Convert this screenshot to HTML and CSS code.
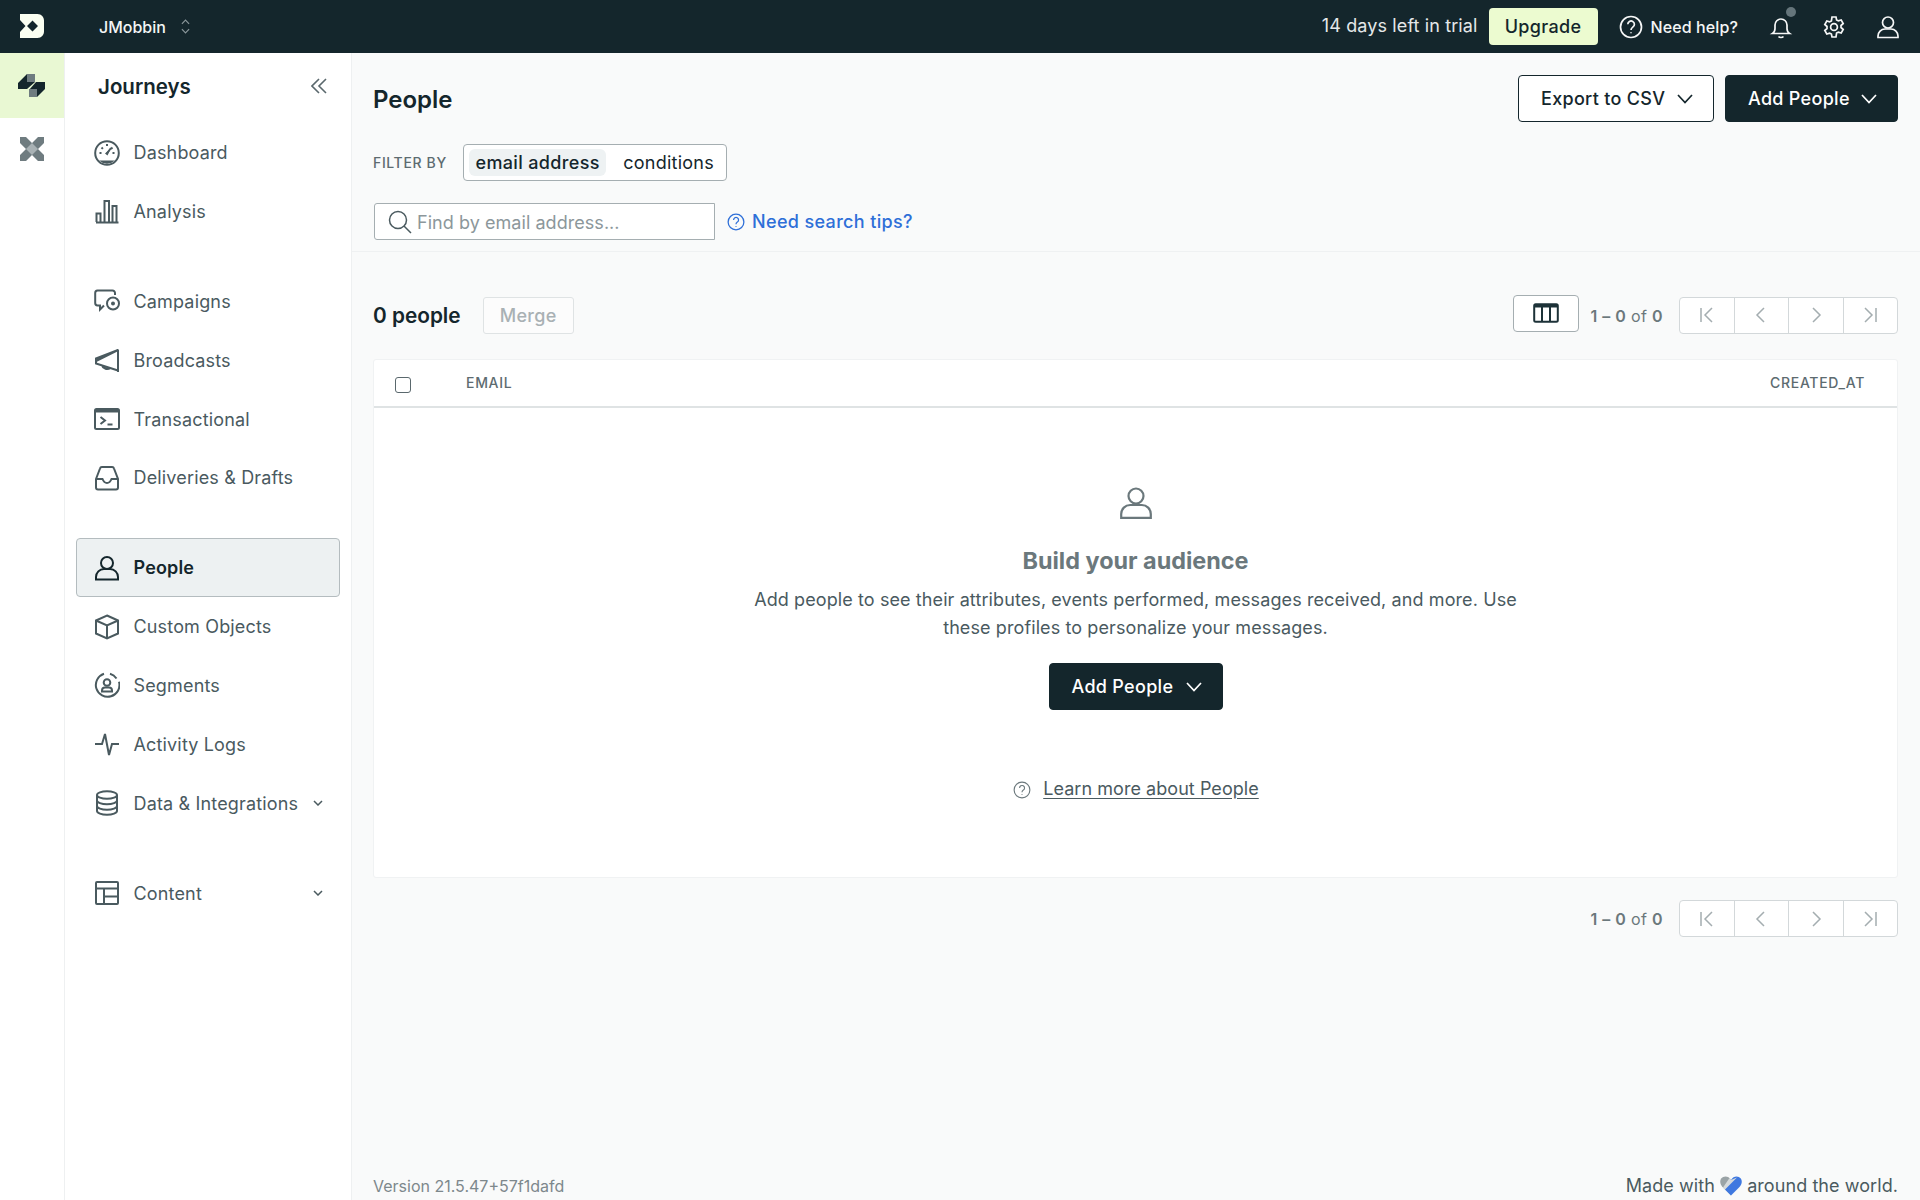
FILE: index.html
```html
<!DOCTYPE html>
<html lang="en">
<head>
<meta charset="utf-8">
<title>People</title>
<link rel="stylesheet" href="styles.css">
</head>
<body>
<header class="topbar">
  <svg class="logo" viewBox="0 0 24 24"><path fill="#fbfff2" fill-rule="evenodd" d="M0 0H17.500C21.500 0 24 3 24 6.500V17.500C24 21 21.500 24 17.500 24H0V18L5.500 12 0 6ZM12.500 6.500 7 12 12.500 17.500 18 12Z"/></svg>
  <div class="workspace">JMobbin</div>
  <svg class="updown" viewBox="0 0 10 16"><path d="M1 5 5 1 9 5M1 11 5 15 9 11"/></svg>
  <div class="top-right">
    <span class="trial">14 days left in trial</span>
    <span class="upgrade">Upgrade</span>
    <svg class="ic-top help-ic" viewBox="0 0 24 24"><circle cx="12" cy="12" r="10.500"/><path d="M8.800 9.300a3.300 3.300 0 1 1 5 2.800c-1.200.8-1.800 1.400-1.800 2.900M12 17.200v1"/></svg>
    <span class="need-help">Need help?</span>
    <span class="bell-wrap">
      <svg class="ic-top" viewBox="0 0 24 24"><path d="M3.500 18.500c1.500-1 2.500-2.500 2.500-5V10a6 6 0 0 1 12 0v3.500c0 2.500 1 4 2.500 5ZM9.500 21.500c1.200 1.300 3.800 1.300 5 0"/></svg>
      <span class="dot"></span>
    </span>
    <svg class="ic-top gear" viewBox="0 0 24 24"><path d="M10 2h4l.6 2.900 1.800 1 2.800-.9 2 3.500-2.200 2v2l2.200 2-2 3.500-2.800-.9-1.800 1L14 22h-4l-.6-2.900-1.800-1-2.800.9-2-3.500 2.200-2v-2l-2.200-2 2-3.500 2.800.9 1.800-1Z"/><circle cx="12" cy="12" r="3.400"/></svg>
    <svg class="ic-top user-top" viewBox="0 0 24 24"><circle cx="12" cy="7.500" r="5.500"/><path d="M2 22.500v-1.500a7 7 0 0 1 7-7h6a7 7 0 0 1 7 7v1.500Z"/></svg>
  </div>
</header>

<div class="shell">
  <aside class="rail">
    <div class="rail-item active">
      <svg class="rail-ic" viewBox="0 0 28 24"><path fill="#14262c" d="M0 9 9 0V8H17L9 15H0ZM11 16 18 8H27V15L19 23V15H11Z"/><path fill="#6f7c80" d="M9 0H17V8H9ZM11 15H19V23H11Z"/></svg>
    </div>
    <div class="rail-item">
      <svg class="rail-ic x" viewBox="0 0 24 24"><path fill="#6f7c80" d="M0 0H6L12 6 18 0H24V6L18 12 24 18V24H18L12 18 6 24H0V18L6 12 0 6Z"/><path fill="#a9b2b5" d="M12 6 18 12 12 18 6 12Z"/></svg>
    </div>
  </aside>

  <nav class="sidebar">
    <div class="side-head">
      <span class="side-title">Journeys</span>
      <svg class="collapse" viewBox="0 0 16 16"><path d="M8 1 1 8 8 15M15 1 8 8 15 15"/></svg>
    </div>
    <div class="nav-group">
      <a class="nav-item"><svg class="nav-ic" viewBox="0 0 26 26"><circle cx="13" cy="13" r="11.800"/><path d="M13 4v2M5.500 13h2M18.500 13h2M7.500 7.500l1.400 1.400M18.500 7.500l-1.400 1.400M17 8l-4.500 6"/><path class="fill" d="M5 20.500h16a11.800 11.800 0 0 1-16 0ZM11 13.500l2.500 2 3.500-7.500Z"/></svg><span>Dashboard</span></a>
      <a class="nav-item"><svg class="nav-ic" viewBox="0 0 26 26"><path d="M2 24.500h22.500M2.500 24v-8.500h4V24M10.500 24V3h4.500v21M18.500 24V8h4v16"/></svg><span>Analysis</span></a>
    </div>
    <div class="nav-group">
      <a class="nav-item"><svg class="nav-ic" viewBox="0 0 26 26"><path d="M10 17.500 6 21.500V17.500H3.500a2.500 2.500 0 0 1-2.300-2.500V5A2.500 2.500 0 0 1 3.500 2.500h15A2.500 2.500 0 0 1 21 5v2"/><circle cx="19" cy="15.500" r="6"/><circle class="fill" cx="19" cy="15.500" r="2"/></svg><span>Campaigns</span></a>
      <a class="nav-item"><svg class="nav-ic" viewBox="0 0 26 26"><path d="M24 2.500V25M24 3 2 11.500V16.500L24 23.500M2 14 24 3M8 18.500c1 3.500 5.500 4.500 8.500 2.500"/></svg><span>Broadcasts</span></a>
      <a class="nav-item"><svg class="nav-ic" viewBox="0 0 26 22"><rect x="1" y="1" width="24" height="20" rx="1.500"/><path class="fill" d="M1 1h24v3.500H1Z"/><path d="M6.500 9 11 12.500 6.500 16M13.500 16.500h5"/></svg><span>Transactional</span></a>
      <a class="nav-item"><svg class="nav-ic" viewBox="0 0 26 26"><path d="M2 14 6 3.500A2 2 0 0 1 8 2h10a2 2 0 0 1 2 1.500L24 14v8.500a2 2 0 0 1-2 2H4a2 2 0 0 1-2-2ZM2 14h6.500c1 2.500 2.500 4 4.500 4s3.500-1.500 4.500-4H24"/></svg><span>Deliveries &amp; Drafts</span></a>
    </div>
    <div class="nav-group">
      <a class="nav-item selected"><svg class="nav-ic" viewBox="0 0 26 26"><circle cx="13" cy="8" r="6"/><path d="M2 24.500v-2.500a8 8 0 0 1 8-8h6a8 8 0 0 1 8 8v2.500Z"/></svg><span>People</span></a>
      <a class="nav-item"><svg class="nav-ic" viewBox="0 0 26 26"><path d="M13 1.500 24 6.500V19.500L13 24.500 2 19.500V6.500ZM2 6.500 13 11.500 24 6.500M13 11.500V24.500"/></svg><span>Custom Objects</span></a>
      <a class="nav-item"><svg class="nav-ic" viewBox="0 0 26 26"><path d="M10 1.800a11.800 11.800 0 1 0 15 8M16 1.800a11.800 11.800 0 0 1 6.500 4.700"/><circle cx="13" cy="10.500" r="3.300"/><path d="M8 19.500v-1a3 3 0 0 1 3-3h4a3 3 0 0 1 3 3v1Z"/></svg><span>Segments</span></a>
      <a class="nav-item"><svg class="nav-ic" viewBox="0 0 26 26"><path d="M1 13H8L11 3 15 24 18 13H25"/></svg><span>Activity Logs</span></a>
      <a class="nav-item"><svg class="nav-ic" viewBox="0 0 26 26"><ellipse cx="13" cy="5" rx="10" ry="3.800"/><path d="M3 5V21c0 2 4.500 3.800 10 3.800S23 23 23 21V5M3 10.500c0 2 4.500 3.800 10 3.800s10-1.800 10-3.800M3 16c0 2 4.500 3.800 10 3.800S23 18 23 16"/></svg><span>Data &amp; Integrations</span><svg class="nav-caret" viewBox="0 0 10 6"><path d="M1 1 5 5 9 1"/></svg></a>
    </div>
    <div class="nav-group">
      <a class="nav-item"><svg class="nav-ic" viewBox="0 0 26 26"><rect x="2" y="2" width="22" height="22" rx="1"/><path d="M2 8.500H24M10 8.500V24M10 16.500H24"/></svg><span>Content</span><svg class="nav-caret" viewBox="0 0 10 6"><path d="M1 1 5 5 9 1"/></svg></a>
    </div>
  </nav>

  <main class="main">
    <section class="page-head">
      <div class="title-row">
        <h1 class="page-title">People</h1>
        <div class="title-actions">
          <button class="btn btn-outline">Export to CSV<svg class="caret" viewBox="0 0 16 10"><path d="M1 1 8 8.500 15 1"/></svg></button>
          <button class="btn btn-dark">Add People<svg class="caret" viewBox="0 0 16 10"><path d="M1 1 8 8.500 15 1"/></svg></button>
        </div>
      </div>
      <div class="filter-row">
        <span class="filter-label">FILTER BY</span>
        <div class="filter-box"><span class="pill on">email address</span><span class="pill">conditions</span></div>
      </div>
      <div class="search-row">
        <div class="search">
          <svg class="search-ic" viewBox="0 0 24 24"><circle cx="10" cy="10" r="8.500"/><path d="M16 16 23 23"/></svg>
          <span class="placeholder">Find by email address...</span>
        </div>
        <svg class="tips-ic" viewBox="0 0 24 24"><circle cx="12" cy="12" r="10.500"/><path d="M8.800 9.300a3.300 3.300 0 1 1 5 2.800c-1.200.8-1.800 1.400-1.800 2.900M12 17.200v1"/></svg>
        <a class="tips">Need search tips?</a>
      </div>
    </section>

    <section class="content">
      <div class="toolbar">
        <span class="count">0 people</span>
        <span class="merge">Merge</span>
        <span class="col-btn"><svg class="col-ic" viewBox="0 0 26 20"><rect x="1.200" y="1.200" width="23.600" height="17.600" rx="1.500"/><path class="fill" d="M1 1h24v3.500H1Z"/><path d="M9 3V18M17 3V18"/></svg></span>
        <span class="range range-top">1 – 0 <i>of</i> 0</span>
        <div class="pager">
          <span class="page-btn"><svg viewBox="0 0 16 16"><path d="M2 1V15M13 1 6 8 13 15"/></svg></span>
          <span class="page-btn"><svg viewBox="0 0 16 16"><path d="M11 1 4 8 11 15"/></svg></span>
          <span class="page-btn"><svg viewBox="0 0 16 16"><path d="M5 1 12 8 5 15"/></svg></span>
          <span class="page-btn"><svg viewBox="0 0 16 16"><path d="M3 1 10 8 3 15M14 1V15"/></svg></span>
        </div>
      </div>

      <div class="card">
        <div class="table-head">
          <span class="check"></span>
          <span class="th">EMAIL</span>
          <span class="th th-right">CREATED_AT</span>
        </div>
        <div class="empty">
          <svg class="empty-ic" viewBox="0 0 32 32"><circle cx="16" cy="9" r="7.500"/><path d="M1.200 30.800V27a9 9 0 0 1 9-9h11.600a9 9 0 0 1 9 9v3.800Z"/></svg>
          <h2 class="empty-title">Build your audience</h2>
          <p class="empty-text">Add people to see their attributes, events performed, messages received, and more. Use these profiles to personalize your messages.</p>
          <button class="btn btn-dark btn-empty">Add People<svg class="caret" viewBox="0 0 16 10"><path d="M1 1 8 8.500 15 1"/></svg></button>
          <div class="learn">
            <svg class="learn-ic" viewBox="0 0 24 24"><circle cx="12" cy="12" r="10.500"/><path d="M8.800 9.300a3.300 3.300 0 1 1 5 2.800c-1.200.8-1.800 1.400-1.800 2.900M12 17.200v1"/></svg>
            <a class="learn-link">Learn more about People</a>
          </div>
        </div>
      </div>

      <div class="bottom-pager">
        <span class="range">1 – 0 <i>of</i> 0</span>
        <div class="pager">
          <span class="page-btn"><svg viewBox="0 0 16 16"><path d="M2 1V15M13 1 6 8 13 15"/></svg></span>
          <span class="page-btn"><svg viewBox="0 0 16 16"><path d="M11 1 4 8 11 15"/></svg></span>
          <span class="page-btn"><svg viewBox="0 0 16 16"><path d="M5 1 12 8 5 15"/></svg></span>
          <span class="page-btn"><svg viewBox="0 0 16 16"><path d="M3 1 10 8 3 15M14 1V15"/></svg></span>
        </div>
      </div>
    </section>

    <footer class="footer">
      <span class="version">Version 21.5.47+57f1dafd</span>
      <span class="made">Made with <svg class="heart" viewBox="0 0 22 20"><path fill="#9aa3a6" d="M11 4C8.500-.5 3.500-.5 1.200 2.500-.8 5.500.5 9 3 11.500L11 19.500Z"/><path fill="#3f78e0" d="M11 4C13.500-.5 18.500-.5 20.800 2.500 22.800 5.500 21.500 9 19 11.500L11 19.500 5 13.500Z"/><path fill="#d5d9db" d="M9.500 2 11 4 17 1.500 5 13.500 3 11.500Z"/></svg> around the world.</span>
    </footer>
  </main>
</div>
</body>
</html>
```
FILE: styles.css
```css
* { box-sizing: border-box; }
html, body { margin: 0; height: 100%; }
body {
  font-family: Inter, "Liberation Sans", sans-serif;
  font-size: 18px;
  letter-spacing: .1px;
  color: #14262c;
  background: #f9fafa;
  overflow: hidden;
  display: flex;
  flex-direction: column;
}
svg { display: block; flex: none; fill: none; stroke: currentColor; }
svg .fill { fill: currentColor; stroke: none; }

.topbar {
  height: 53px;
  flex: none;
  background: #14262c;
  color: #fff;
  display: flex;
  align-items: center;
  padding: 0 20px;
}
.logo { width: 24px; height: 24px; stroke: none; margin-top: -1px; }
.workspace { margin-left: 55px; font-size: 16px; font-weight: 500; color: #f4f6f6; letter-spacing: 0; }
.updown { width: 9px; height: 15px; margin-left: 15px; color: #8b979b; stroke-width: 1.300; }
.top-right { margin-left: auto; display: flex; align-items: center; }
.trial { font-size: 18px; color: #e4e8e9; margin-top: -2px; letter-spacing: .12px; }
.upgrade {
  margin-left: 11px;
  width: 109px;
  height: 37px;
  background: #ecfbd0;
  color: #14262c;
  border-radius: 4px;
  font-weight: 500;
  letter-spacing: .35px;
  display: flex;
  align-items: center;
  justify-content: center;
}
.ic-top { width: 24px; height: 24px; stroke-width: 1.700; color: #f6f7f7; }
.help-ic { margin-left: 21.500px; }
.need-help { margin-left: 7.500px; font-size: 16px; font-weight: 500; color: #f4f6f6; letter-spacing: .1px; }
.bell-wrap { position: relative; margin-left: 31px; }
.dot { position: absolute; right: -3px; top: -8px; width: 10px; height: 10px; border-radius: 50%; background: #65757b; }
.gear { margin-left: 29px; }
.user-top { margin-left: 30px; }

.shell { flex: 1; display: flex; min-height: 0; }
.rail { width: 65px; flex: none; background: #fff; border-right: 1px solid #eef0f1; }
.rail-item { height: 65px; display: flex; align-items: center; justify-content: center; }
.rail-item.active { background: #e9f8d3; }
.rail-ic { width: 28px; height: 24px; stroke: none; }
.rail-ic.x { width: 24px; height: 24px; margin-top: -3px; }

.sidebar { width: 287px; flex: none; background: #fff; border-right: 1px solid #eef0f1; padding: 0 11px; }
.side-head { height: 70.300px; display: flex; align-items: center; padding: 0 0 4.300px 22px; }
.side-title { font-size: 20.500px; font-weight: 600; color: #14262c; letter-spacing: 0; }
.collapse { width: 16px; height: 16px; margin-left: auto; margin-right: 13px; color: #5a686d; stroke-width: 1.600; }
.nav-group { margin-bottom: 31.200px; }
.nav-item { height: 58.800px; display: flex; align-items: center; padding-left: 17px; color: #4a5a5f; font-size: 18px; border: 1px solid transparent; border-radius: 4px; letter-spacing: .16px; }
.nav-item span { margin-left: 13.500px; white-space: nowrap; }
.nav-ic { width: 26px; height: 26px; stroke-width: 2; }
.nav-item.selected { background: #edf1f2; border-color: #b4bcbf; color: #14262c; font-weight: 600; }
.nav-caret { width: 10px; height: 6px; margin-left: auto; margin-right: 16px; stroke-width: 1.500; }

.main { flex: 1; min-width: 0; display: flex; flex-direction: column; }
.page-head { padding: 22px 22px 11px 21px; border-bottom: 1px solid #eff1f2; }
.title-row { display: flex; align-items: center; justify-content: space-between; height: 47px; }
.page-title { margin: 2px 0 0; font-size: 24px; font-weight: 600; color: #14262c; letter-spacing: 0; }
.title-actions { display: flex; gap: 11px; }
.btn {
  height: 47px;
  padding: 0 20px 0 22px;
  border-radius: 4px;
  font: 500 18px Inter, "Liberation Sans", sans-serif;
  letter-spacing: .3px;
  display: flex;
  align-items: center;
  border: 1px solid #14262c;
}
.btn-outline { background: #fff; color: #14262c; width: 196px; }
.btn-dark { background: #14262c; color: #fff; width: 173px; }
.caret { width: 16px; height: 10px; stroke-width: 1.700; margin-left: auto; }

.filter-row { display: flex; align-items: center; margin-top: 22px; }
.filter-label { font-size: 14px; font-weight: 500; color: #5d6b70; width: 90px; letter-spacing: .65px; }
.filter-box {
  width: 264px; height: 37px;
  background: #fff;
  border: 1px solid #a5aeb1;
  border-radius: 4px;
  display: flex;
  align-items: center;
  padding: 0 4px 0 5px;
}
.pill { height: 27px; display: flex; align-items: center; padding: 0 8px; color: #14262c; font-size: 18px; margin-left: 9px; letter-spacing: .25px; }
.pill.on { background: #eef2f3; border-radius: 6px; font-weight: 500; margin-left: 0; padding: 0; width: 141px; justify-content: center; letter-spacing: .35px; }

.search-row { display: flex; align-items: center; margin-top: 22px; }
.search {
  width: 341px; height: 37px; margin-left: 1px;
  background: #fff;
  border: 1px solid #a5aeb1;
  border-radius: 3px 0 0 3px;
  display: flex;
  align-items: center;
  padding-left: 13px;
}
.search-ic { width: 24px; height: 24px; color: #4a5a5f; stroke-width: 1.500; }
.placeholder { margin-left: 5px; color: #8c979b; letter-spacing: .05px; padding-top: 1px; }
.tips-ic { width: 18px; height: 18px; margin-left: 12px; color: #2e6fd8; stroke-width: 1.700; }
.tips { margin-left: 7px; color: #2e6fd8; font-weight: 500; letter-spacing: .35px; }

.content { padding: 0 22px 0 21px; }
.toolbar { display: flex; align-items: center; height: 40px; margin-top: 43px; }
.count { font-size: 20.800px; font-weight: 600; color: #14262c; letter-spacing: 0; margin-top: 1px; }
.merge {
  margin-left: 22px;
  width: 91px; height: 37px;
  padding-top: 1px;
  border: 1px solid #dfe3e4;
  background: #fcfcfc;
  border-radius: 3px;
  color: #a9b1b4;
  font-weight: 500;
  letter-spacing: .3px;
  display: flex;
  align-items: center;
  justify-content: center;
}
.col-btn {
  margin-left: auto;
  width: 66px; height: 37px;
  background: #fff;
  border: 1px solid #a5aeb1;
  border-radius: 4px;
  display: flex;
  align-items: center;
  justify-content: center;
  color: #1d3238;
  position: relative;
  top: -2px;
}
.col-ic { width: 26px; height: 20px; stroke-width: 2; }
.range { margin-left: 11px; font-size: 16px; font-weight: 600; color: #6b787c; white-space: nowrap; letter-spacing: .5px; }
.range-top { padding-top: 2px; }
.range i { font-style: normal; font-weight: 400; }
.pager {
  margin-left: 16px;
  width: 219px; height: 37px;
  display: flex;
  background: #fff;
  border: 1px solid #d3d8da;
  border-radius: 4px;
}
.page-btn { flex: 1; display: flex; align-items: center; justify-content: center; color: #a4adb0; border-left: 1px solid #d3d8da; }
.page-btn:first-child { border-left: 0; }
.page-btn svg { width: 16px; height: 16px; stroke-width: 1.500; }

.card { margin-top: 24px; height: 519px; background: #fff; border: 1px solid #f0f2f3; border-radius: 3px; display: flex; flex-direction: column; }
.table-head { height: 48px; flex: none; display: flex; align-items: center; border-bottom: 2px solid #dfe3e4; padding: 0 32px 0 21px; }
.check { width: 16px; height: 16px; border: 1.500px solid #5a686d; border-radius: 3px; background: #fff; margin-top: 4px; }
.th { margin-left: 55px; font-size: 14px; font-weight: 500; color: #5d6b70; letter-spacing: .7px; margin-top: -1px; }
.th-right { margin-left: auto; }

.empty { flex: 1; display: flex; flex-direction: column; align-items: center; padding-top: 78.500px; }
.empty-ic { width: 32px; height: 32px; color: #6b787c; stroke-width: 2.200; }
.empty-title { margin: 27.500px 0 0; font-size: 23.400px; font-weight: 700; color: #6b787c; line-height: 30px; letter-spacing: 0; }
.empty-text { margin: 10px 0 0; width: 790px; text-align: center; line-height: 28px; color: #4a5a5f; }
.btn-empty { margin-top: 21px; width: 174px; }
.learn { display: flex; align-items: center; margin-top: 68px; padding-left: 1px; }
.learn-ic { width: 18px; height: 18px; color: #6b787c; stroke-width: 1.500; margin-top: 2px; }
.learn-link { margin-left: 12px; color: #4a5a5f; text-decoration: underline; text-underline-offset: 3px; letter-spacing: .05px; }

.bottom-pager { display: flex; align-items: center; justify-content: flex-end; margin-top: 22px; }

.footer { margin-top: auto; display: flex; align-items: center; justify-content: space-between; padding: 0 22px 1px 21px; height: 28px; }
.version { font-size: 16px; color: #7d888c; margin-top: 1px; letter-spacing: 0; }
.made { display: flex; align-items: center; color: #4a5a5f; white-space: pre; letter-spacing: .07px; }
.heart { width: 22px; height: 20px; stroke: none; }
```
